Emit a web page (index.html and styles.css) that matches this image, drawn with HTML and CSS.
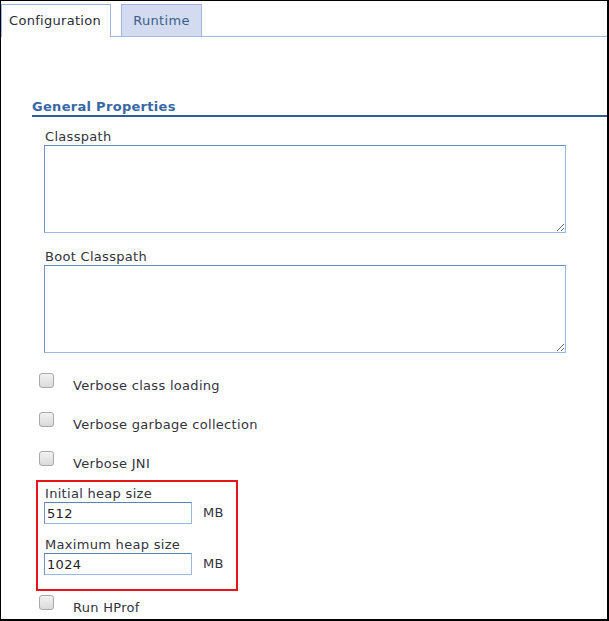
FILE: index.html
```html
<!DOCTYPE html>
<html>
<head>
<meta charset="utf-8">
<link rel="stylesheet" href="styles.css">
</head>
<body>
<div class="frame">
  <div class="tabs">
    <div class="tab tab-active">Configuration</div>
    <div class="tab tab-inactive">Runtime</div>
  </div>
  <div class="content">
    <div class="heading">General Properties</div>
    <div class="field">
      <div class="label">Classpath</div>
      <textarea class="area"></textarea>
    </div>
    <div class="field field-second">
      <div class="label">Boot Classpath</div>
      <textarea class="area"></textarea>
    </div>
    <div class="check-row check-first"><span class="box"></span><span class="check-label">Verbose class loading</span></div>
    <div class="check-row"><span class="box"></span><span class="check-label">Verbose garbage collection</span></div>
    <div class="check-row"><span class="box"></span><span class="check-label">Verbose JNI</span></div>
    <div class="highlight">
      <div class="label">Initial heap size</div>
      <div class="input-row"><input class="text-input" type="text" value="512"><span class="unit">MB</span></div>
      <div class="label label-second">Maximum heap size</div>
      <div class="input-row"><input class="text-input" type="text" value="1024"><span class="unit">MB</span></div>
    </div>
    <div class="check-row check-last"><span class="box"></span><span class="check-label">Run HProf</span></div>
  </div>
</div>
</body>
</html>
```

FILE: styles.css
```css
html, body {
  margin: 0;
  padding: 0;
  background: #ffffff;
}

.frame {
  box-sizing: border-box;
  width: 609px;
  height: 621px;
  border-top: 1px solid #000;
  border-left: 1px solid #000;
  border-right: 2px solid #000;
  border-bottom: 2px solid #000;
  overflow: hidden;
  font-family: "DejaVu Sans", Verdana, sans-serif;
  font-size: 13px;
  letter-spacing: 0.3px;
  color: #333340;
  background: #fff;
}

.tabs {
  display: flex;
  align-items: flex-end;
  gap: 10px;
  padding-top: 3px;
  height: 32px;
  border-bottom: 1px solid #a3badf;
}

.tab {
  box-sizing: border-box;
  display: flex;
  align-items: center;
  border: 1px solid #9fb5db;
  border-bottom: none;
}

.tab-active {
  width: 110px;
  height: 33px;
  margin-bottom: -1px;
  background: #fff;
  color: #2c2c38;
  padding-left: 7px;
  padding-bottom: 1px;
}

.tab-inactive {
  width: 81px;
  height: 32px;
  justify-content: center;
  background: #d2dbef;
  color: #3c5d8e;
}

.content {
  padding-left: 31px;
}

.heading {
  margin-top: 61px;
  padding-top: 1px;
  line-height: 16px;
  font-weight: bold;
  color: #3868a6;
  border-bottom: 2px solid #2f5e96;
}

.field {
  margin-left: 12px;
  margin-top: 11px;
}

.field-second {
  margin-top: 15px;
}

.label {
  line-height: 16px;
  padding-top: 1px;
  padding-left: 1px;
}

.area {
  display: block;
  box-sizing: border-box;
  width: 522px;
  height: 88px;
  margin: 0;
  border: 1px solid #9ab9e0;
  border-top-color: #6a8cbf;
  border-left-color: #7597c8;
  background: #fff;
  resize: both;
  font-family: "DejaVu Sans", Verdana, sans-serif;
  font-size: 12px;
}

.check-row {
  display: flex;
  align-items: flex-start;
  height: 20px;
  margin-top: 19px;
  margin-left: 7px;
}

.check-first {
  margin-top: 20px;
}

.check-last {
  margin-top: 4px;
}

.box {
  box-sizing: border-box;
  width: 15px;
  height: 15px;
  border: 1px solid #a9a9a9;
  border-radius: 3px;
  background: linear-gradient(#f2f2f2, #dadada);
  flex: none;
}

.check-label {
  margin-left: 19px;
  padding-top: 5px;
  line-height: 16px;
}

.highlight {
  box-sizing: border-box;
  width: 202px;
  height: 111px;
  margin-top: 9px;
  margin-left: 4px;
  border: 2px solid #e8141b;
  padding: 3px 0 0 6px;
}

.label-second {
  margin-top: 12px;
}

.input-row {
  display: flex;
  align-items: center;
  gap: 11px;
}

.text-input {
  box-sizing: border-box;
  width: 148px;
  height: 22px;
  margin: 0;
  padding: 1px 2px 0;
  border: 1px solid #9ab9e0;
  border-top-color: #5f82b6;
  border-left-color: #6f91c4;
  font-family: "DejaVu Sans", Verdana, sans-serif;
  font-size: 13px;
  letter-spacing: 0.3px;
  color: #222;
  outline: none;
}

.unit {
  line-height: 16px;
}
```
